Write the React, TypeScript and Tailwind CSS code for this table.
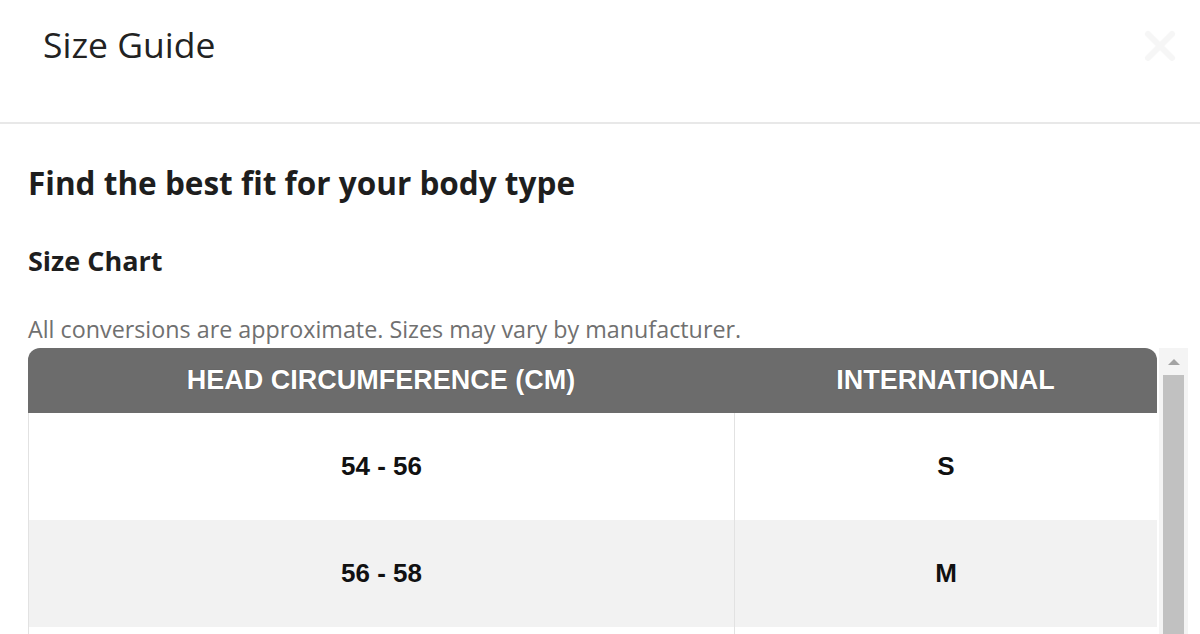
import { X } from 'lucide-react';

const rows = [
    { head: '54 - 56', intl: 'S' },
    { head: '56 - 58', intl: 'M' },
];

export default function App() {
    return (
        <div className="h-[634px] w-[1200px] overflow-hidden bg-white" style={{ fontFamily: '"Open Sans", "Noto Sans", sans-serif' }}>
            {/* modal header */}
            <div className="h-[124px] border-b-2 border-[#e8e8e8] flex items-start justify-between pl-[43px] pr-[16px] pt-[20px]">
                <h2 className="text-[35.5px] leading-[48px] font-normal text-[#222]">Size Guide</h2>
                <button className="mt-[2px] w-[48px] h-[48px] flex items-center justify-center text-[#f6f6f6]">
                    <X size={48} strokeWidth={3} />
                </button>
            </div>

            {/* modal body */}
            <div className="pl-[28px] pt-[39px]">
                <h3 className="text-[31.5px] leading-[40px] font-bold text-[#1e1e1e]">Find the best fit for your body type</h3>
                <h4 className="mt-[40px] text-[27px] leading-[36px] font-bold text-[#1e1e1e]">Size Chart</h4>
                <p className="mt-[35px] text-[23.3px] leading-[30px] text-[#707070]">All conversions are approximate. Sizes may vary by manufacturer.</p>

                <div className="flex mt-[4px]">
                    <div className="w-[1129px] shrink-0" style={{ fontFamily: '"Liberation Sans", Arial, sans-serif' }}>
                        <div className="grid grid-cols-[706px_1fr] h-[65px] bg-[#6c6c6c] rounded-t-[12px] text-white font-bold text-[27px] [text-shadow:0_0_1px_rgba(0,0,0,0.4)]">
                            <div className="flex items-center justify-center">HEAD CIRCUMFERENCE (CM)</div>
                            <div className="flex items-center justify-center">INTERNATIONAL</div>
                        </div>
                        {rows.map((r, i) => (
                            <div key={i} className={`grid grid-cols-[706px_1fr] h-[107px] border-l border-[#e2e2e2] text-[26px] font-bold text-[#111] ${i % 2 === 1 ? 'bg-[#f2f2f2]' : 'bg-white'}`}>
                                <div className="flex items-center justify-center border-r border-[#e2e2e2]">{r.head}</div>
                                <div className="flex items-center justify-center">{r.intl}</div>
                            </div>
                        ))}
                        {/* next row, scrolled out of view */}
                        <div className="grid grid-cols-[706px_1fr] h-[107px] border-l border-[#e2e2e2] bg-white">
                            <div className="border-r border-[#e2e2e2]" />
                            <div />
                        </div>
                    </div>

                    {/* scrollbar */}
                    <div className="ml-[2px] w-[29px] bg-[#f4f4f4] flex flex-col items-center">
                        <div className="h-[27px] flex items-center justify-center">
                            <div className="w-0 h-0 border-l-[6px] border-r-[6px] border-b-[6px] border-l-transparent border-r-transparent border-b-[#a3a3a3]" />
                        </div>
                        <div className="w-[21px] h-[400px] bg-[#c1c1c1]" />
                    </div>
                </div>
            </div>
        </div>
    );
}
